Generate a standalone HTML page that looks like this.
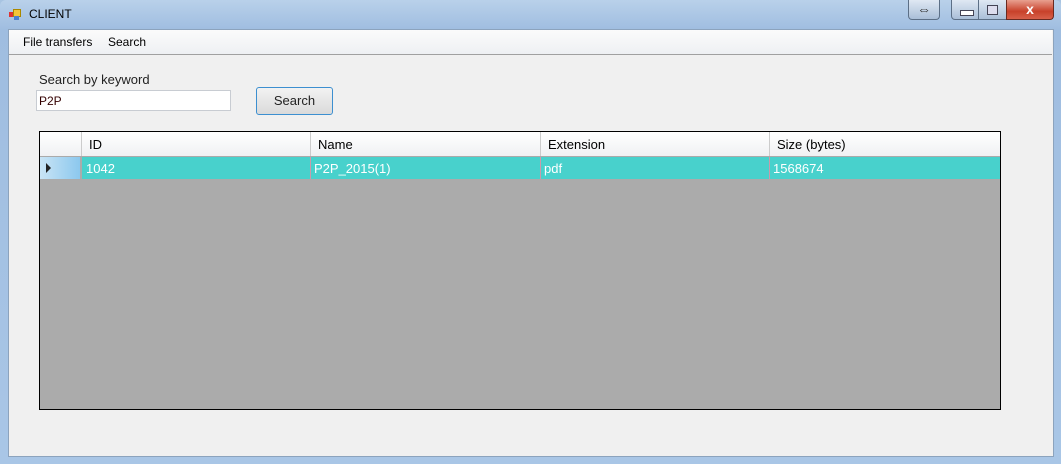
<!DOCTYPE html>
<html><head><style>
body{margin:0;width:1061px;height:464px;overflow:hidden;background:#a8c4e2;font-family:"Liberation Sans",sans-serif;font-size:12px;position:relative}
.a{position:absolute}
</style></head><body>
<div class="a" style="left:0;top:0;width:1061px;height:464px;background:linear-gradient(#b9d1ea,#9fbde0 30px,#a9c6e6);border-radius:6px 6px 0 0"></div>
<div class="a" style="left:9;top:9px;left:9px;width:12px;height:12px"><div class="a" style="left:0;top:3px;width:5px;height:5px;background:#d33"></div><div class="a" style="left:4px;top:0;width:6px;height:6px;background:#f3c43a;border:1px solid #a80"></div><div class="a" style="left:5px;top:7px;width:5px;height:4px;background:#4a7fd0"></div></div>
<div class="a" style="left:29px;top:7px;font-size:12px;color:#000">CLIENT</div>
<div class="a" style="left:908px;top:0;width:30px;height:19px;border:1px solid #5c6f86;border-top:none;border-radius:0 0 4px 4px;background:linear-gradient(#dfe8f3,#aabfd8);text-align:center;line-height:18px;font-size:14px;color:#333">⇔</div>
<div class="a" style="left:951px;top:0;width:54px;height:19px;border:1px solid #5c6f86;border-top:none;border-radius:0 0 0 4px;background:linear-gradient(#dfe8f3,#aabfd8)"></div>
<div class="a" style="left:960px;top:10px;width:12px;height:4px;background:#fff;border:1px solid #445"></div>
<div class="a" style="left:987px;top:5px;width:9px;height:8px;border:1px solid #445;background:#dde"></div>
<div class="a" style="left:978px;top:0;width:1px;height:19px;background:#5c6f86"></div>
<div class="a" style="left:1006px;top:0;width:46px;height:19px;border:1px solid #6a2a20;border-top:none;border-radius:0 0 4px 0;background:linear-gradient(#e8a090,#c8412a 60%,#d8604a);color:#fff;text-align:center;font-weight:bold;line-height:18px;font-size:14px">x</div>
<div class="a" style="left:8px;top:29px;width:1044px;height:426px;background:#f0f0f0;border:1px solid #8ca3bd"></div>
<div class="a" style="left:9px;top:30px;width:1043px;height:24px;background:linear-gradient(#fbfbfb,#eef0f3);border-bottom:1px solid #a0a0a0"></div>
<div class="a" style="left:23px;top:35px">File transfers</div>
<div class="a" style="left:108px;top:35px">Search</div>
<div class="a" style="left:39px;top:72px;font-size:13px;color:#222">Search by keyword</div>
<div class="a" style="left:36px;top:90px;width:195px;height:21px;background:#fff;border:1px solid #c8ccd2;box-sizing:border-box;padding:3px 2px;color:#300">P2P</div>
<div class="a" style="left:256px;top:87px;width:77px;height:28px;box-sizing:border-box;border:1px solid #3c8fd0;border-radius:3px;background:linear-gradient(#f2f2f2,#dadada);text-align:center;line-height:26px;font-size:13px;color:#222">Search</div>
<div class="a" style="left:39px;top:131px;width:962px;height:279px;box-sizing:border-box;border:1px solid #000;background:#ababab"></div>
<div class="a" style="left:40px;top:132px;width:960px;height:24px;background:linear-gradient(#fff,#f0f1f3);border-bottom:1px solid #aaa"></div>
<div class="a" style="left:81px;top:132px;width:1px;height:24px;background:#ccc"></div>
<div class="a" style="left:310px;top:132px;width:1px;height:24px;background:#ccc"></div>
<div class="a" style="left:540px;top:132px;width:1px;height:24px;background:#ccc"></div>
<div class="a" style="left:769px;top:132px;width:1px;height:24px;background:#ccc"></div>
<div class="a" style="left:89px;top:137px;font-size:13px">ID</div>
<div class="a" style="left:318px;top:137px;font-size:13px">Name</div>
<div class="a" style="left:548px;top:137px;font-size:13px">Extension</div>
<div class="a" style="left:777px;top:137px;font-size:13px">Size (bytes)</div>
<div class="a" style="left:40px;top:157px;width:40px;height:22px;background:linear-gradient(90deg,#c9e4f5,#8cc8ee)"></div>
<div class="a" style="left:46px;top:163px;width:0;height:0;border-left:5px solid #222;border-top:5px solid transparent;border-bottom:5px solid transparent"></div>
<div class="a" style="left:82px;top:157px;width:918px;height:22px;background:#48d1cc"></div>
<div class="a" style="left:310px;top:157px;width:1px;height:22px;background:#c9a"></div>
<div class="a" style="left:540px;top:157px;width:1px;height:22px;background:#c9a"></div>
<div class="a" style="left:769px;top:157px;width:1px;height:22px;background:#c9a"></div>
<div class="a" style="left:86px;top:161px;color:#fff;font-size:13px">1042</div>
<div class="a" style="left:314px;top:161px;color:#fff;font-size:13px">P2P_2015(1)</div>
<div class="a" style="left:544px;top:161px;color:#fff;font-size:13px">pdf</div>
<div class="a" style="left:773px;top:161px;color:#fff;font-size:13px">1568674</div>
</body></html>
